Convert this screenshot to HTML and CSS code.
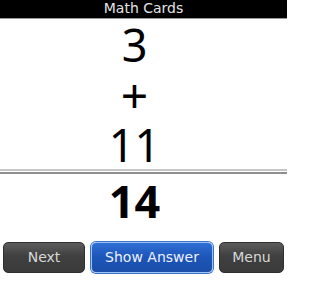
FILE: index.html
```html
<!DOCTYPE html>
<html>
<head>
<meta charset="utf-8">
<link rel="stylesheet" href="styles.css">
</head>
<body>
<div class="screen">
  <div class="titlebar">Math Cards</div>
  <div class="card">
    <div class="num">3</div>
    <div class="num plus">+</div>
    <div class="num last">11</div>
    <div class="sep"></div>
    <div class="answer">14</div>
  </div>
  <div class="buttons">
    <div class="btn">Next</div>
    <div class="btn primary">Show Answer</div>
    <div class="btn">Menu</div>
  </div>
</div>
</body>
</html>
```
FILE: styles.css
```css
html, body {
  margin: 0;
  padding: 0;
  background: #fff;
  font-family: "DejaVu Sans", sans-serif;
}
.screen {
  width: 287px;
  height: 300px;
  overflow: hidden;
}
.titlebar {
  height: 18px;
  line-height: 17px;
  background: #000;
  color: #e4e4e4;
  font-size: 14px;
  text-align: center;
  border-bottom: 1px solid #9a9a9a;
}
.card {
  padding-top: 1px;
  padding-right: 18px;
  text-align: center;
  font-family: "Noto Sans", sans-serif;
}
.num {
  font-size: 45px;
  line-height: 50px;
  height: 50px;
  color: #000;
}
.num.plus {
  font-size: 48px;
}
.num.last {
  height: 49px;
}
.sep {
  margin-right: -18px;
  height: 1px;
  border-top: 2px solid #c6c6c6;
  border-bottom: 2px solid #8e8e8e;
}
.answer {
  margin-top: 2px;
  font-size: 45px;
  font-weight: bold;
  line-height: 50px;
  height: 50px;
  color: #000;
}
.buttons {
  margin-top: 16px;
  padding: 0 3px;
  display: grid;
  grid-template-columns: 82px 122px 65px;
  column-gap: 6px;
}
.btn {
  box-sizing: border-box;
  height: 31px;
  line-height: 29px;
  border-radius: 5px;
  border: 1px solid #2e2e2e;
  background: linear-gradient(#5c5c5c, #404040 45%, #3a3a3a);
  color: #d8d8d8;
  font-size: 14px;
  text-align: center;
}
.btn.primary {
  border: 1px solid #9cc4f4;
  box-shadow: 0 0 0 1px #3d74c8;
  background: linear-gradient(#2f6fd4, #1d55b8 50%, #1a4ea8);
  color: #eef3ff;
}
```
